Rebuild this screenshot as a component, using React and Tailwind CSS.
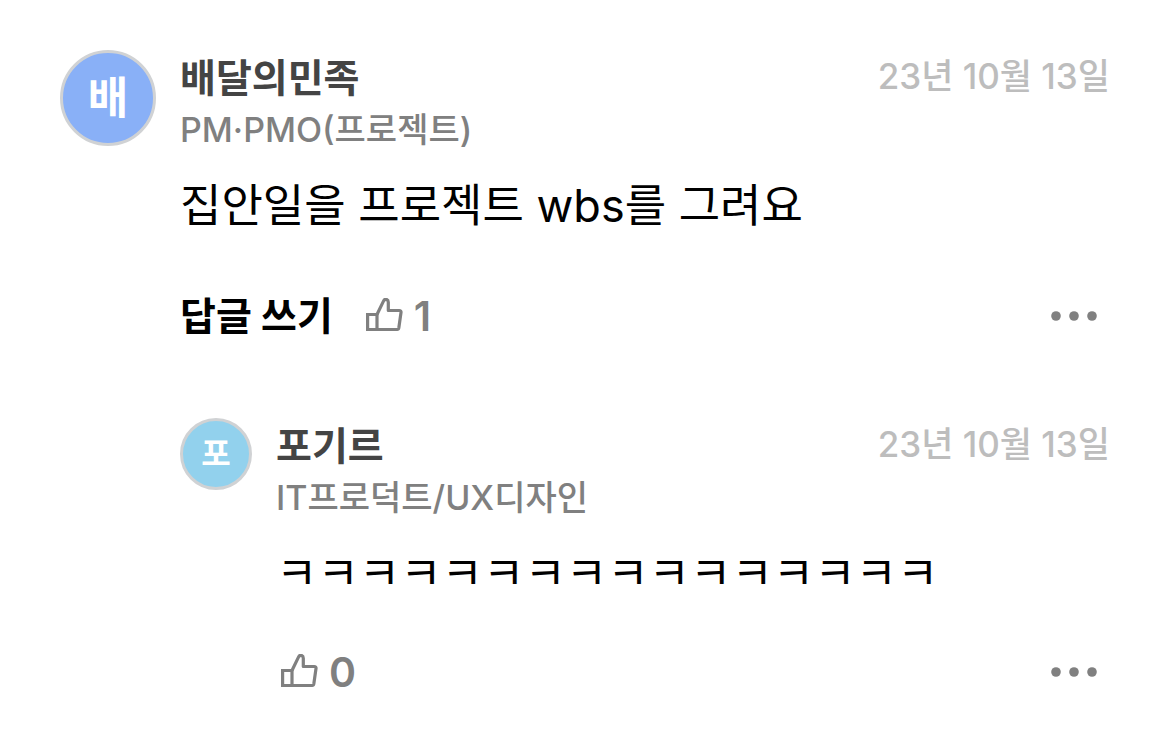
import React from "react";

function ThumbIcon() {
  return (
    <svg
      xmlns="http://www.w3.org/2000/svg"
      width="38"
      height="36"
      viewBox="0 0 38 36"
      fill="none"
      stroke="currentColor"
      strokeWidth="3.2"
      strokeLinejoin="round"
      aria-hidden="true"
    >
      <path d="M1.6 16.5H11V31.5H1.6Z" strokeLinejoin="miter" />
      <path d="M11 16.5L17.6 2.9C19 0.2 22.3 1.2 22.3 4.2V12.5H33.2C34.5 12.5 35.2 13.3 35 14.5L32.8 30C32.6 31 32.1 31.5 31.2 31.5H11" />
    </svg>
  );
}

function MoreIcon() {
  return (
    <svg
      xmlns="http://www.w3.org/2000/svg"
      width="48"
      height="12"
      viewBox="0 0 48 12"
      fill="currentColor"
      aria-hidden="true"
    >
      <circle cx="6" cy="6" r="4.8" />
      <circle cx="24" cy="6" r="4.8" />
      <circle cx="42" cy="6" r="4.8" />
    </svg>
  );
}

function Comment({ initial, avatarClass, name, job, date, text, likes, canReply, children }) {
  return (
    <article className="flex gap-6">
      <div
        className={`flex shrink-0 items-center justify-center rounded-full border-3 border-[#d0d2d4] font-bold text-white ${avatarClass}`}
      >
        {initial}
      </div>

      <div className="min-w-0 flex-1">
        <header className="flex items-start justify-between">
          <div>
            <h3 className="text-[39px] leading-14 font-bold text-[#444444]">{name}</h3>
            <p className="text-[34px] leading-12 font-medium text-[#808080]">{job}</p>
          </div>
          <time className="text-[35px] leading-13 font-medium text-[#bdbdbd]">{date}</time>
        </header>

        <p className="mt-3 text-[45px] leading-20 text-black">{text}</p>

        <div className="mt-[34px] flex items-center text-[#808080]">
          {canReply && (
            <button className="mr-7 py-2 text-[39px] leading-14 font-bold text-black">
              답글 쓰기
            </button>
          )}
          <button className="flex items-center gap-[10px] px-[5px] text-[41px] leading-12 font-semibold">
            <ThumbIcon />
            <span>{likes}</span>
          </button>
          <button aria-label="더보기" className="mr-3 ml-auto">
            <MoreIcon />
          </button>
        </div>

        {children && <div className="mt-[66px]">{children}</div>}
      </div>
    </article>
  );
}

function App() {
  return (
    <main className="min-h-screen bg-white px-15 py-12.5 font-[Inter,'Noto_Sans_CJK_KR',sans-serif]">
      <Comment
        initial="배"
        avatarClass="size-24 bg-[#89b0f7] text-[44px]"
        name="배달의민족"
        job="PM·PMO(프로젝트)"
        date="23년 10월 13일"
        text="집안일을 프로젝트 wbs를 그려요"
        likes={1}
        canReply
      >
        <Comment
          initial="포"
          avatarClass="size-18 bg-[#92d1ed] text-[32px]"
          name="포기르"
          job="IT프로덕트/UX디자인"
          date="23년 10월 13일"
          text="ㅋㅋㅋㅋㅋㅋㅋㅋㅋㅋㅋㅋㅋㅋㅋㅋ"
          likes={0}
        />
      </Comment>
    </main>
  );
}

export default App;
